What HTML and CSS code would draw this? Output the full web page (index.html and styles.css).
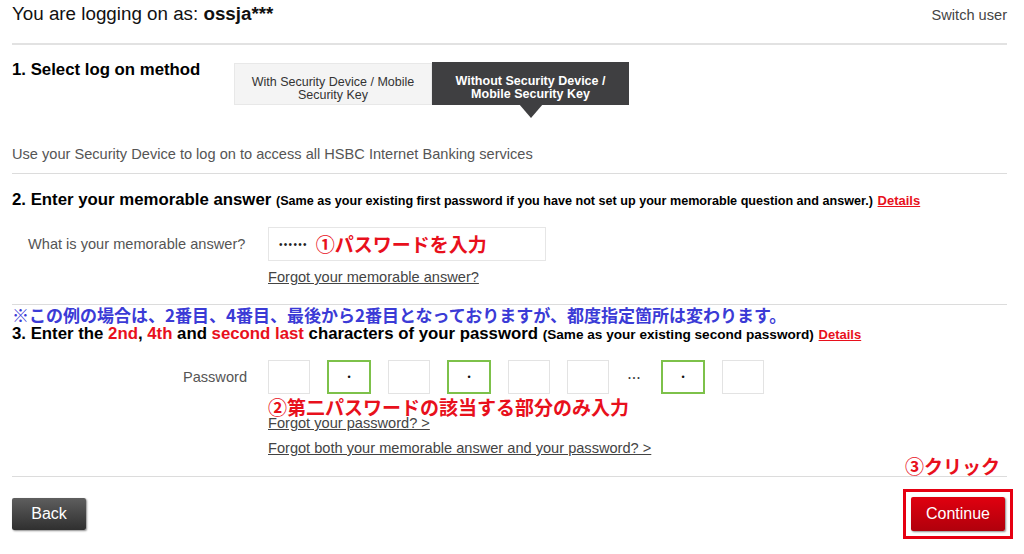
FILE: index.html
```html
<!DOCTYPE html>
<html lang="en">
<head>
<meta charset="utf-8">
<title>Log on</title>
<link rel="stylesheet" href="styles.css">
</head>
<body>
<div class="page">
  <div class="top">
    <div class="who">You are logging on as: <b>ossja***</b></div>
    <div class="switch">Switch user</div>
  </div>

  <div class="method">
    <h2 class="h1">1. Select log on method</h2>
    <div class="tabs">
      <div class="tab">With Security Device / Mobile<br>Security Key</div>
      <div class="tab active">Without Security Device /<br>Mobile Security Key</div>
    </div>
  </div>
  <p class="intro">Use your Security Device to log on to access all HSBC Internet Banking services</p>

  <div class="section sec2">
    <h2 class="heading">2. Enter your memorable answer <span class="note">(Same as your existing first password if you have not set up your memorable question and answer.)</span> <a class="details">Details</a></h2>
    <div class="row">
      <div class="label">What is your memorable answer?</div>
      <div class="field">
        <div class="input"><span class="dots">••••••</span><span class="anno">①パスワードを入力</span></div>
        <a class="link first">Forgot your memorable answer?</a>
      </div>
    </div>
  </div>

  <div class="section sec3">
    <p class="blue">※この例の場合は、2番目、4番目、最後から2番目となっておりますが、都度指定箇所は変わります。</p>
    <h2 class="heading">3. Enter the <span class="red">2nd</span>, <span class="red">4th</span> and <span class="red">second last</span> characters of your password <span class="note note3">(Same as your existing second password)</span> <a class="details">Details</a></h2>
    <div class="row pw">
      <div class="label right">Password</div>
      <div class="field">
        <div class="boxes">
          <div class="box"></div>
          <div class="box on">•</div>
          <div class="box"></div>
          <div class="box on">•</div>
          <div class="box"></div>
          <div class="box"></div>
          <div class="ellipsis">•••</div>
          <div class="box on">•</div>
          <div class="box"></div>
        </div>
        <div class="anno anno2">②第二パスワードの該当する部分のみ入力</div>
        <a class="link pw1">Forgot your password? &gt;</a>
        <a class="link pw2">Forgot both your memorable answer and your password? &gt;</a>
      </div>
    </div>
  </div>

  <div class="footer">
    <button class="btn back">Back</button>
    <div class="cont-wrap">
      <span class="anno anno3">③クリック</span>
      <div class="highlight"><button class="btn continue">Continue</button></div>
    </div>
  </div>
</div>
</body>
</html>
```

FILE: styles.css
```css
* { box-sizing: border-box; }
html, body { margin: 0; padding: 0; background: #fff; }
body { font-family: "Liberation Sans", Arial, "Noto Sans CJK JP", sans-serif; color: #000; }

.page { width: 1024px; padding: 0 17px 0 12px; }

.top {
  display: flex;
  justify-content: space-between;
  align-items: baseline;
  padding-top: 3px;
  height: 45px;
  border-bottom: 2px solid #e2e2e2;
}
.who { font-size: 18.8px; line-height: 22px; color: #111; }
.who b { font-weight: bold; }
.switch { font-size: 14.6px; color: #444; }

.method { display: flex; padding-top: 15px; }
.h1 { margin: 0; width: 222px; font-size: 16.8px; line-height: 20px; font-weight: bold; }
.tabs { display: flex; align-items: flex-end; margin-top: 2px; }
.tab {
  width: 198px; height: 42px;
  background: #f4f4f4;
  border: 1px solid #e8e8e8;
  padding-top: 10px;
  font-size: 12.5px; line-height: 13px; color: #333;
  display: flex; align-items: center; justify-content: center; text-align: center;
}
.tab.active {
  position: relative;
  width: 197px; height: 43px;
  padding-top: 9px;
  background: #3f3f41; border-color: #3f3f41;
  color: #fff; font-weight: bold;
}
.tab.active::after {
  content: "";
  position: absolute;
  left: 50%; top: 100%;
  margin-left: -12px;
  border-left: 12px solid transparent;
  border-right: 12px solid transparent;
  border-top: 14px solid #3f3f41;
}

.intro {
  margin: 40px 0 0;
  padding-bottom: 10px;
  font-size: 14.6px; line-height: 18px; color: #555;
  border-bottom: 1px solid #dcdcdc;
}

.heading { margin: 0; font-size: 16.8px; line-height: 20px; font-weight: bold; }
.note { font-size: 12.6px; font-weight: bold; }
.note3 { font-size: 13.6px; }
.details { font-size: 13px; font-weight: bold; color: #e8101c; text-decoration: underline; }
.red { color: #e8101c; }

.sec2 { padding-top: 16px; padding-bottom: 19px; border-bottom: 1px solid #dcdcdc; }
.row { display: flex; padding-left: 16px; }
.sec2 .row { margin-top: 16px; }
.label { width: 240px; font-size: 14.6px; color: #555; line-height: 34px; }
.label.right { text-align: right; padding-right: 21px; }
.field { display: flex; flex-direction: column; align-items: flex-start; }
.input {
  width: 278px; height: 34px;
  border: 1px solid #e6e6e6;
  display: flex; align-items: center; padding-left: 10px;
}
.input .dots { font-size: 10px; letter-spacing: 1.3px; color: #222; margin-right: 8px; }
.anno {
  font-family: "Noto Sans CJK JP", sans-serif;
  font-weight: bold; font-size: 19px; line-height: 22px; color: #e8101c;
}
.link { font-size: 14.6px; line-height: 16px; color: #444; text-decoration: underline; }
.link.first { margin-top: 8px; }

.sec3 { padding-bottom: 20px; border-bottom: 1px solid #dcdcdc; }
.blue {
  margin: 0;
  font-family: "Noto Sans CJK JP", sans-serif;
  font-weight: bold; font-size: 17px; line-height: 19px; color: #3b3bd6;
}
.pw { margin-top: 15px; }
.boxes { display: flex; gap: 17px; align-items: center; }
.box {
  width: 42px; height: 34px;
  border: 1px solid #e3e3e3;
  display: flex; align-items: center; justify-content: center;
  font-size: 9px; color: #111;
}
.box.on { width: 44px; border: 2px solid #7dc14a; }
.ellipsis { width: 18px; text-align: center; font-size: 7px; letter-spacing: 2px; color: #333; }
.anno2 { margin-top: 4px; line-height: 18px; }
.pw1 { line-height: 14px; }
.pw2 { margin-top: 10px; }

.footer {
  display: flex; justify-content: space-between; align-items: center;
  padding-top: 12px;
  margin-right: -6px;
}
.btn {
  font-family: "Liberation Sans", Arial, sans-serif;
  font-size: 16px; color: #fff; border: 0; cursor: pointer;
  border-radius: 2px;
  box-shadow: 1px 1px 2px rgba(0,0,0,0.45);
}
.back {
  width: 74px; height: 32px;
  background: linear-gradient(#5e5e5e, #2f2f2f);
}
.cont-wrap { position: relative; }
.anno3 { position: absolute; right: 13px; top: -34px; white-space: nowrap; }
.highlight { border: 3px solid #e60012; padding: 5px; }
.continue {
  display: block;
  width: 94px; height: 34px;
  background: linear-gradient(#e0000f, #b0000c);
}
```
